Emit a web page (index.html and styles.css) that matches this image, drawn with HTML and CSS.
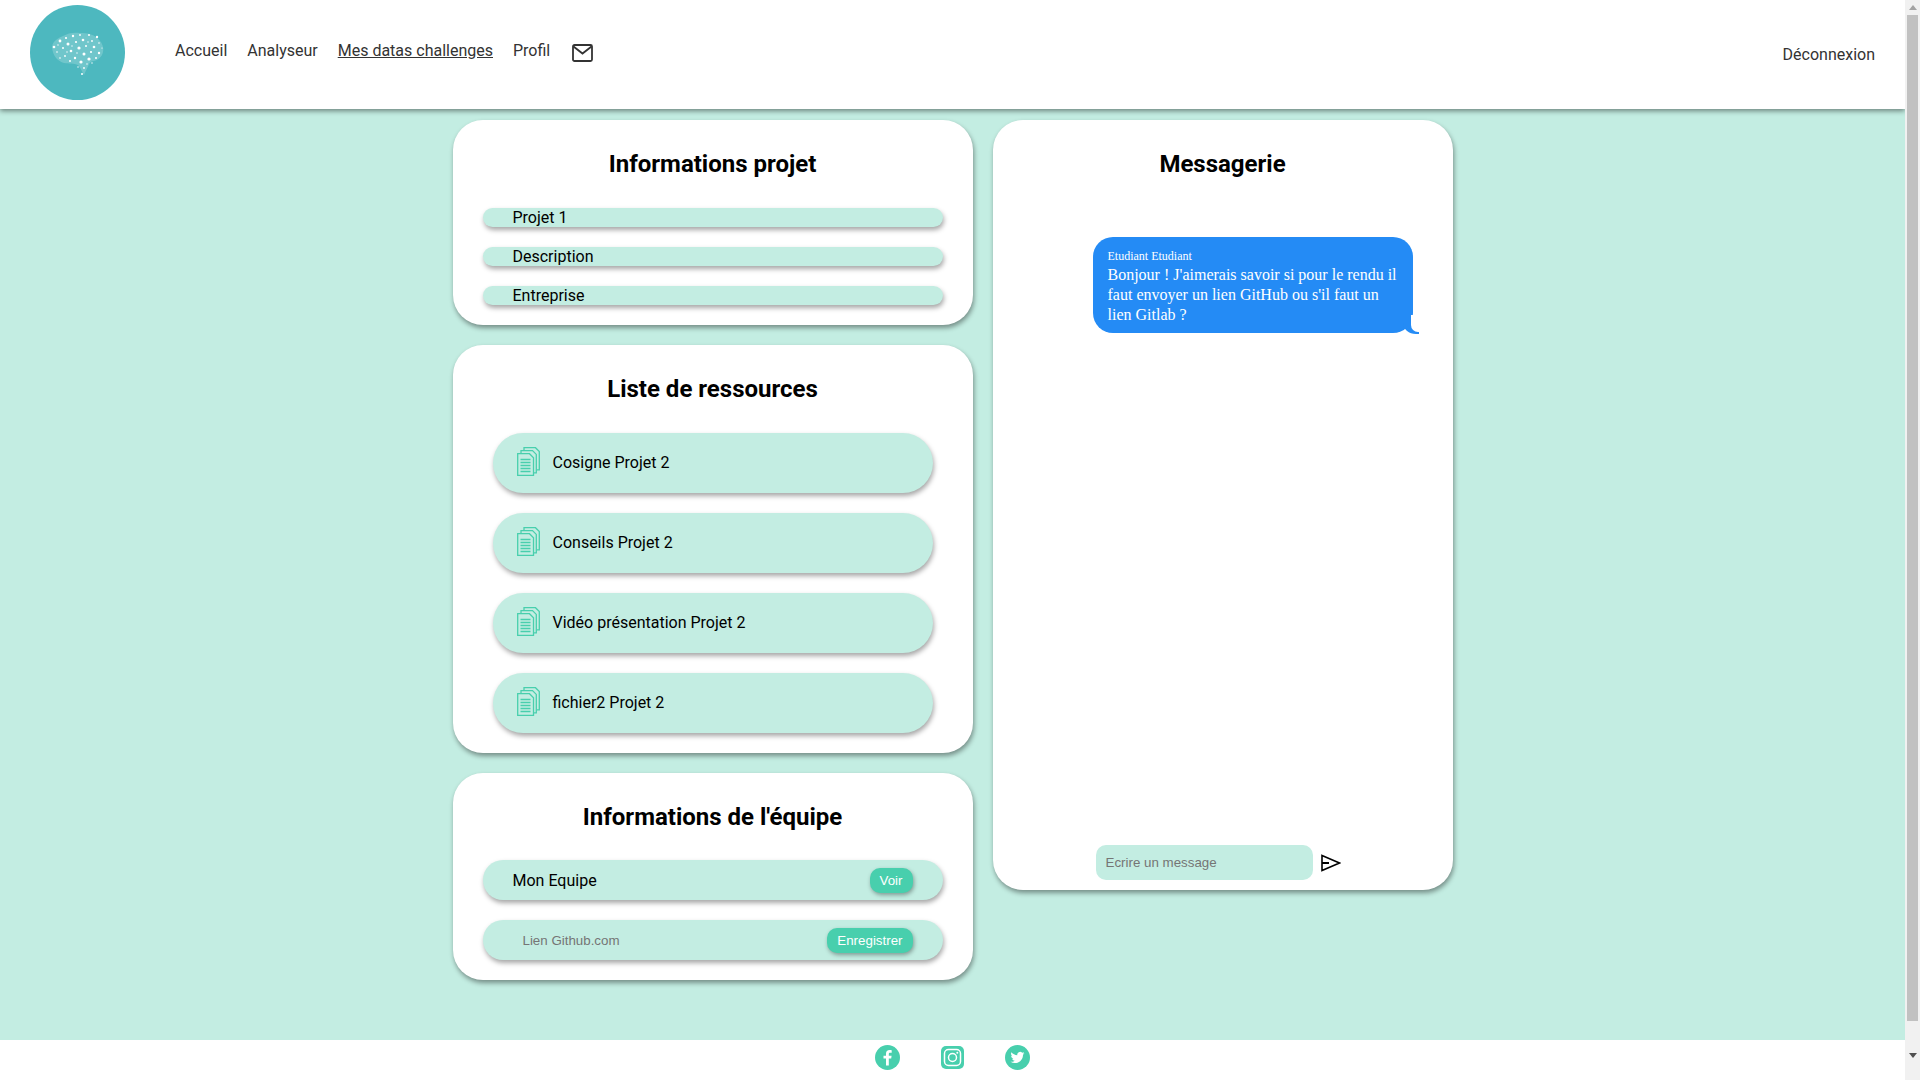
FILE: index.html
```html
<!DOCTYPE html>
<html lang="fr">
<head>
    <meta charset="UTF-8">
    <meta name="viewport" content="width=device-width, initial-scale=1.0">
    <title>Mes datas challenges</title>
    <link rel="stylesheet" href="styles.css">
</head>
<body>
    <header class="topbar">
        <a class="logo" href="#">
            <svg width="95" height="95" viewBox="0 0 95 95">
                <circle cx="47.5" cy="47.5" r="47.5" fill="#4db8bf"/>
                <path d="M22 42c1-7 7-9 11-11 5-3 11-4 17-3 7 0 13 1 17 5 5 4 7 9 6 14-1 5-5 8-9 9-2 0-4 1-5 3-1 3-3 6-5 11-2-3-3-7-6-10-4-2-9-1-14-2-6-2-11-6-12-16z" fill="#fff" opacity=".2"/>
                <g fill="#fff">
                    <circle cx="24" cy="42" r="1.3"/><circle cx="27" cy="47" r=".8"/><circle cx="30" cy="36" r="1.4"/>
                    <circle cx="33" cy="43" r="1"/><circle cx="36" cy="33" r="1.1"/><circle cx="38" cy="39" r="1.5"/>
                    <circle cx="41" cy="46" r="1.3"/><circle cx="35" cy="51" r=".9"/><circle cx="30" cy="53" r=".8"/>
                    <circle cx="43" cy="31" r="1.2"/><circle cx="46" cy="37" r="1.1"/><circle cx="49" cy="43" r="1.6"/>
                    <circle cx="45" cy="53" r="1.2"/><circle cx="40" cy="56" r="1"/><circle cx="50" cy="30" r=".9"/>
                    <circle cx="53" cy="35" r="1.3"/><circle cx="56" cy="41" r="1"/><circle cx="54" cy="49" r="1.5"/>
                    <circle cx="51" cy="57" r="1.6"/><circle cx="59" cy="30" r="1"/><circle cx="62" cy="36" r=".9"/>
                    <circle cx="64" cy="42" r="1.3"/><circle cx="61" cy="47" r="1.1"/><circle cx="59" cy="54" r="1.6"/>
                    <circle cx="67" cy="32" r="1.2"/><circle cx="69" cy="38" r=".8"/><circle cx="69" cy="48" r="1.2"/>
                    <circle cx="66" cy="53" r="1"/><circle cx="54" cy="63" r=".9"/><circle cx="52" cy="69" r="1"/>
                    <circle cx="28" cy="40" r=".7"/><circle cx="42" cy="41" r=".7"/><circle cx="37" cy="47" r=".7"/>
                    <circle cx="47" cy="48" r=".7"/><circle cx="58" cy="37" r=".7"/><circle cx="48" cy="62" r=".7"/>
                    <circle cx="57" cy="59" r=".7"/><circle cx="62" cy="58" r=".7"/><circle cx="72" cy="43" r=".6"/>
                </g>
            </svg>
        </a>
        <nav class="menu">
            <a href="#">Accueil</a>
            <a href="#">Analyseur</a>
            <a href="#" class="active">Mes datas challenges</a>
            <a href="#">Profil</a>
            <a href="#" class="mail">
                <svg width="21" height="18" viewBox="0 0 21 18" fill="none" stroke="#333" stroke-width="1.8">
                    <rect x="1" y="1" width="19" height="16" rx="1.5"/>
                    <path d="M1.5 2.5l9 7 9-7"/>
                </svg>
            </a>
        </nav>
        <a href="#" class="logout">Déconnexion</a>
    </header>

    <main class="content">
        <div class="col-left">
            <section class="card">
                <h2>Informations projet</h2>
                <div class="info-list">
                    <p class="info-row">Projet 1</p>
                    <p class="info-row">Description</p>
                    <p class="info-row">Entreprise</p>
                </div>
            </section>

            <section class="card">
                <h2>Liste de ressources</h2>
                <ul class="resources">
                    <li>
                        <svg class="doc" width="23" height="29" viewBox="0 0 23 29"><use href="#doc-icon"/></svg>
                        Cosigne Projet 2
                    </li>
                    <li>
                        <svg class="doc" width="23" height="29" viewBox="0 0 23 29"><use href="#doc-icon"/></svg>
                        Conseils Projet 2
                    </li>
                    <li>
                        <svg class="doc" width="23" height="29" viewBox="0 0 23 29"><use href="#doc-icon"/></svg>
                        Vidéo présentation Projet 2
                    </li>
                    <li>
                        <svg class="doc" width="23" height="29" viewBox="0 0 23 29"><use href="#doc-icon"/></svg>
                        fichier2 Projet 2
                    </li>
                </ul>
            </section>

            <section class="card card-team">
                <h2>Informations de l'équipe</h2>
                <div class="team-list">
                    <div class="team-row">
                        <span>Mon Equipe</span>
                        <button type="button" class="btn">Voir</button>
                    </div>
                    <form class="team-row">
                        <input type="text" class="github" placeholder="Lien Github.com">
                        <button type="button" class="btn">Enregistrer</button>
                    </form>
                </div>
            </section>
        </div>

        <section class="card chat">
            <h2>Messagerie</h2>
            <div class="messages">
                <div class="bubble">
                    <span class="author">Etudiant Etudiant</span>
                    <p>Bonjour ! J'aimerais savoir si pour le rendu il faut envoyer un lien GitHub ou s'il faut un lien Gitlab ?</p>
                </div>
            </div>
            <form class="send">
                <input type="text" placeholder="Ecrire un message">
                <svg width="20" height="18" viewBox="0 0 20 18" fill="none" stroke="#000" stroke-width="1.6">
                    <path d="M1 1.5L18.5 9 1 16.5z"/>
                    <path d="M1 9h7" stroke-width="2"/>
                </svg>
            </form>
        </section>
    </main>

    <footer class="bottom">
        <a href="#">
            <svg width="25" height="25" viewBox="0 0 25 25">
                <circle cx="12.5" cy="12.5" r="12.5" fill="#48cfad"/>
                <path d="M13.8 20.5v-7h2.4l.4-2.8h-2.8V9c0-.8.3-1.3 1.4-1.3h1.5V5.2c-.3 0-1.1-.1-2.1-.1-2.2 0-3.6 1.3-3.6 3.700v1.900H8.500v2.800h2.500v7z" fill="#fff"/>
            </svg>
        </a>
        <a href="#">
            <svg width="25" height="25" viewBox="0 0 25 25" fill="none">
                <rect x="1" y="1" width="23" height="23" rx="5" fill="#48cfad"/>
                <rect x="4.5" y="4.5" width="16" height="16" rx="4" stroke="#fff" stroke-width="1.5"/>
                <circle cx="12.5" cy="12.5" r="4" stroke="#fff" stroke-width="1.5"/>
                <circle cx="17.3" cy="7.7" r="1" fill="#fff"/>
            </svg>
        </a>
        <a href="#">
            <svg width="25" height="25" viewBox="0 0 25 25">
                <circle cx="12.5" cy="12.5" r="12.5" fill="#48cfad"/>
                <path transform="translate(5.5 5.5) scale(.58)" fill="#fff" d="M23.953 4.57a10 10 0 01-2.825.775 4.958 4.958 0 002.163-2.723c-.951.555-2.005.959-3.127 1.184a4.92 4.92 0 00-8.384 4.482C7.69 8.095 4.067 6.13 1.64 3.162a4.822 4.822 0 00-.666 2.475c0 1.71.87 3.213 2.188 4.096a4.904 4.904 0 01-2.228-.616v.06a4.923 4.923 0 003.946 4.827 4.996 4.996 0 01-2.212.085 4.936 4.936 0 004.604 3.417 9.867 9.867 0 01-6.102 2.105c-.39 0-.779-.023-1.17-.067a13.995 13.995 0 007.557 2.209c9.053 0 13.998-7.496 13.998-13.985 0-.21 0-.42-.015-.63A9.935 9.935 0 0024 4.59z"/>
            </svg>
        </a>
    </footer>

    <div class="scrollbar">
        <span class="arrow-up"></span>
        <span class="thumb"></span>
        <span class="arrow-down"></span>
    </div>

    <svg class="sprites" width="0" height="0">
        <symbol id="doc-icon" viewBox="0 0 23 29">
            <g fill="none" stroke="#48cfad" stroke-width="1.3">
                <path d="M7 3.5V.7h11.5l3.8 3.8v18.3h-2.300"/>
                <path d="M4 6.500V3.600h11.500l3.800 3.800v18.400H17"/>
                <path d="M.7 6.700h11.800l4 4v17.600H.7z"/>
                <path d="M3.500 12.500h10M3.500 15.500h10M3.500 18.500h10M3.500 21.500h10M3.500 24.500h10"/>
            </g>
        </symbol>
    </svg>
</body>
</html>
```

FILE: styles.css
```css
body {
    font-family: Roboto, "Liberation Sans", sans-serif;
    font-size: 16px;
    margin: 0;
    padding: 0 15px 0 0;
    background-color: #c3ede2;
    color: #000;
}
a {
    color: inherit;
    text-decoration: none;
}
.sprites {
    position: absolute;
}

/* barre du haut */
.topbar {
    position: relative;
    display: flex;
    align-items: center;
    height: 109px;
    padding: 0 30px;
    box-sizing: border-box;
    background: white;
    color: #333;
    box-shadow: 0px 2px 5px rgba(0, 0, 0, 0.45);
}
.logo {
    display: block;
    height: 95px;
    margin-bottom: 4px;
}
.menu {
    display: flex;
    align-items: center;
    gap: 20px;
    margin-left: 50px;
    margin-bottom: 9px;
}
.menu .active {
    text-decoration: underline;
}
.mail {
    display: block;
    height: 18px;
    margin-top: 5px;
    margin-left: 2px;
}
.logout {
    margin-left: auto;
}

/* contenu */
.content {
    display: flex;
    align-items: flex-start;
    gap: 20px;
    width: 1000px;
    margin: 0 auto;
    padding: 11px 0 60px;
}
.col-left {
    display: flex;
    flex-direction: column;
    gap: 20px;
    width: 520px;
}
.card {
    padding: 30px 30px 20px;
    background: white;
    border-radius: 30px;
    box-shadow: 1px 3px 5px rgba(0, 0, 0, 0.4);
}
.card h2 {
    margin: 0 0 30px;
    font-size: 24px;
    line-height: 28px;
    font-weight: 700;
    text-align: center;
}
.card-team h2 {
    margin-bottom: 29px;
}

.info-list {
    display: flex;
    flex-direction: column;
    gap: 20px;
}
.info-row {
    margin: 0;
    height: 19px;
    line-height: 19px;
    padding-left: 30px;
    background: #c3ede2;
    border-radius: 10px;
    box-shadow: 1px 3px 5px rgba(0, 0, 0, 0.35);
}

.resources {
    display: flex;
    flex-direction: column;
    gap: 20px;
    margin: 0;
    padding: 0 10px;
    list-style: none;
}
.resources li {
    display: flex;
    align-items: center;
    gap: 13px;
    height: 60px;
    padding: 0 0 2px 24px;
    box-sizing: border-box;
    background: #c3ede2;
    border-radius: 30px;
    box-shadow: 1px 3px 5px rgba(0, 0, 0, 0.35);
}
.doc {
    margin-top: -1px;
}

.team-list {
    display: flex;
    flex-direction: column;
    gap: 20px;
}
.team-row {
    display: flex;
    align-items: center;
    justify-content: space-between;
    height: 40px;
    margin: 0;
    padding: 0 30px;
    background: #c3ede2;
    border-radius: 20px;
    box-shadow: 1px 3px 5px rgba(0, 0, 0, 0.35);
}
.btn {
    height: 25px;
    padding: 0 10px;
    border: none;
    border-radius: 10px;
    background: #48cfad;
    color: white;
    font-family: "Liberation Sans", Arial, sans-serif;
    font-size: 13.33px;
    box-shadow: 1px 2px 4px rgba(0, 0, 0, 0.35);
}
.github {
    width: 200px;
    padding: 0 10px;
    border: none;
    outline: none;
    background: transparent;
    font-family: "Liberation Sans", Arial, sans-serif;
    font-size: 13.33px;
}

/* messagerie */
.chat {
    display: flex;
    flex-direction: column;
    width: 460px;
    height: 770px;
    padding: 30px 0 10px;
    box-sizing: border-box;
}
.messages {
    flex: 1;
    padding: 29px 40px 0 100px;
}
.bubble {
    position: relative;
    padding: 11px 15px 8px;
    background: #248bf5;
    border-radius: 20px;
    color: white;
    font-family: "Liberation Serif", serif;
    line-height: 20px;
}
.bubble::before {
    content: "";
    position: absolute;
    right: -6px;
    bottom: -1px;
    height: 16px;
    border-right: 16px solid #248bf5;
    border-bottom-left-radius: 13px 11px;
}
.bubble::after {
    content: "";
    position: absolute;
    right: -9px;
    bottom: 1px;
    width: 11px;
    height: 17px;
    background: white;
    border-bottom-left-radius: 7px;
}
.author {
    display: block;
    font-size: 12px;
    line-height: 17px;
}
.bubble p {
    margin: 0;
}
.send {
    display: flex;
    align-items: center;
    gap: 8px;
    padding-left: 103px;
}
.send input {
    width: 217px;
    height: 35px;
    padding: 0 10px;
    box-sizing: border-box;
    border: none;
    outline: none;
    border-radius: 10px;
    background: #c3ede2;
    font-family: "Liberation Sans", Arial, sans-serif;
    font-size: 13.33px;
}

/* pied de page */
.bottom {
    display: flex;
    justify-content: center;
    gap: 40px;
    height: 82px;
    padding-top: 5px;
    background: white;
}
.bottom a {
    display: block;
    height: 25px;
}

/* ascenseur de la fenetre */
.scrollbar {
    position: fixed;
    top: 0;
    right: 0;
    display: flex;
    flex-direction: column;
    align-items: center;
    width: 15px;
    height: 100vh;
    background: #f1f1f1;
}
.arrow-up {
    margin-top: 5px;
    border-left: 4px solid transparent;
    border-right: 4px solid transparent;
    border-bottom: 5px solid #a3a3a3;
}
.thumb {
    width: 11px;
    height: 1006px;
    margin-top: 5px;
    background: #c1c1c1;
}
.arrow-down {
    margin-top: 32px;
    border-left: 4px solid transparent;
    border-right: 4px solid transparent;
    border-top: 5px solid #505050;
}
```
